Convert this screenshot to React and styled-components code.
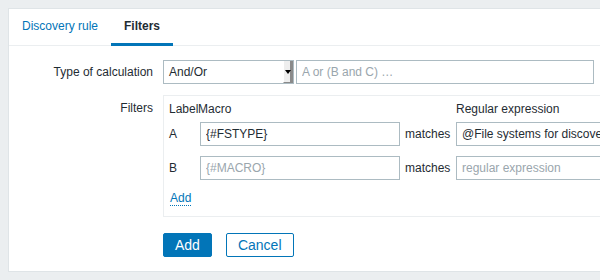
import React from "react";
import styled, { createGlobalStyle } from "styled-components";

const GlobalStyle = createGlobalStyle`
  html, body {
    margin: 0;
    padding: 0;
    background: #ebeef0;
    overflow: hidden;
  }
  body {
    font-family: "Liberation Sans", Arial, sans-serif;
    font-size: 12px;
    color: #1f2c33;
  }
`;

const Page = styled.div`
  padding: 8px 0 8px 8px;
  width: 760px;
`;

const Panel = styled.div`
  background: #ffffff;
  border: 1px solid #dfe4e7;
  border-right: none;
`;

const TabBar = styled.div`
  display: flex;
  height: 36px;
  border-bottom: 1px solid #ebeef0;
`;

const Tab = styled.a`
  display: block;
  height: 37px;
  box-sizing: border-box;
  padding: 0 13px;
  line-height: 34px;
  margin-bottom: -1px;
  font-weight: ${({ $active }) => ($active ? "bold" : "normal")};
  color: ${({ $active }) => ($active ? "#1f2c33" : "#0275b8")};
  border-bottom: 3px solid ${({ $active }) => ($active ? "#0275b8" : "transparent")};
  cursor: pointer;
`;

const Form = styled.div`
  padding: 14px 0 14px 0;
`;

const FormRow = styled.div`
  display: grid;
  grid-template-columns: 144px 1fr;
  column-gap: 10px;
  align-items: ${({ $top }) => ($top ? "start" : "center")};
  margin-top: ${({ $mt }) => $mt || 0}px;
`;

const Label = styled.div`
  text-align: right;
  line-height: 14px;
  padding-top: ${({ $pt }) => $pt || 0}px;
`;

const Controls = styled.div`
  display: flex;
  align-items: center;
  gap: 2px;
`;

const SelectBox = styled.div`
  display: flex;
  align-items: center;
  justify-content: space-between;
  box-sizing: border-box;
  width: 131px;
  height: 24px;
  border: 1px solid #acbbc2;
  background: #fff;
  padding-left: 5px;
`;

const ArrowButton = styled.div`
  position: relative;
  width: 10px;
  height: 22px;
  box-sizing: border-box;
  background: #eeeeee;
  border-left: 1px solid #ffffff;
  border-right: 3px solid #8a8a8a;
  border-bottom: 1px solid #8a8a8a;

  &::after {
    content: "";
    position: absolute;
    left: 1px;
    top: 9px;
    border-left: 3px solid transparent;
    border-right: 3px solid transparent;
    border-top: 4px solid #000;
  }
`;

const TextInput = styled.input`
  box-sizing: border-box;
  height: 24px;
  width: ${({ $w }) => $w}px;
  border: 1px solid #acbbc2;
  padding: 0 5px;
  margin: 0;
  font-family: "Liberation Sans", Arial, sans-serif;
  font-size: 12px;
  color: #1f2c33;
  background: #fff;
  outline: none;

  &::placeholder {
    color: #9aa6ad;
  }
`;

const FilterBox = styled.div`
  border: 1px solid #ebeef0;
  padding: 6px 5px 10px 5px;
`;

const FilterGrid = styled.div`
  display: grid;
  grid-template-columns: ${({ $head }) =>
    $head ? "29px 202px 56px 220px" : "31px 200px 56px 220px"};
  align-items: center;
  margin-top: ${({ $mt }) => $mt || 0}px;
  line-height: 14px;
`;

const Matches = styled.div`
  padding-left: 5px;
`;

const LinkButton = styled.a`
  display: inline-block;
  margin-top: 12px;
  margin-left: 1px;
  line-height: 13px;
  color: #0275b8;
  border-bottom: 1px dotted #0275b8;
  cursor: pointer;
`;

const Buttons = styled.div`
  display: flex;
  gap: 14px;
`;

const Button = styled.button`
  height: 24px;
  box-sizing: border-box;
  padding: 0 11px;
  font-family: "Liberation Sans", Arial, sans-serif;
  font-size: 14px;
  border: 1px solid #0275b8;
  border-radius: 2px;
  background: ${({ $primary }) => ($primary ? "#0275b8" : "#ffffff")};
  color: ${({ $primary }) => ($primary ? "#ffffff" : "#0275b8")};
  cursor: pointer;
`;

const filters = [
  { id: "A", macro: "{#FSTYPE}", regex: "@File systems for discovery" },
  { id: "B", macro: "", regex: "" },
];

export default function App() {
  return (
    <>
      <GlobalStyle />
      <Page>
        <Panel>
          <TabBar>
            <Tab>Discovery rule</Tab>
            <Tab $active>Filters</Tab>
          </TabBar>
          <Form>
            <FormRow>
              <Label>Type of calculation</Label>
              <Controls>
                <SelectBox>
                  <span>And/Or</span>
                  <ArrowButton />
                </SelectBox>
                <TextInput $w={298} placeholder="A or (B and C) …" />
              </Controls>
            </FormRow>
            <FormRow $top $mt={11}>
              <Label $pt={6}>Filters</Label>
              <FilterBox>
                <FilterGrid $head>
                  <div>Label</div>
                  <div>Macro</div>
                  <div />
                  <div>Regular expression</div>
                </FilterGrid>
                {filters.map((f, i) => (
                  <FilterGrid key={f.id} $mt={i === 0 ? 6 : 10}>
                    <div>{f.id}</div>
                    <TextInput $w={200} defaultValue={f.macro} placeholder="{#MACRO}" />
                    <Matches>matches</Matches>
                    <TextInput
                      $w={220}
                      defaultValue={f.regex}
                      placeholder="regular expression"
                    />
                  </FilterGrid>
                ))}
                <LinkButton>Add</LinkButton>
              </FilterBox>
            </FormRow>
            <FormRow $mt={16}>
              <div />
              <Buttons>
                <Button $primary>Add</Button>
                <Button>Cancel</Button>
              </Buttons>
            </FormRow>
          </Form>
        </Panel>
      </Page>
    </>
  );
}
